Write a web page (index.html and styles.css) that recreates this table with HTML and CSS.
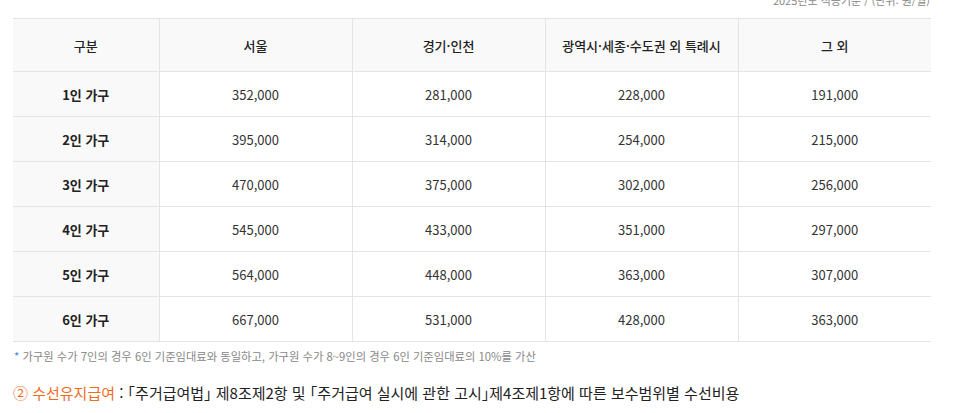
FILE: index.html
```html
<!DOCTYPE html>
<html lang="ko">
<head>
<meta charset="utf-8">
<link rel="stylesheet" href="styles.css">
</head>
<body>
<div class="wrap">
  <div class="caption"><span class="star">*</span> 2025년도 적용기준 / (단위: 원/월)</div>
  <table class="rent">
    <colgroup>
      <col class="c0"><col class="c1"><col class="c1"><col class="c1"><col class="c1">
    </colgroup>
    <thead>
      <tr><th>구분</th><th>서울</th><th>경기·인천</th><th>광역시·세종·수도권 외 특례시</th><th>그 외</th></tr>
    </thead>
    <tbody>
      <tr><th>1인 가구</th><td>352,000</td><td>281,000</td><td>228,000</td><td>191,000</td></tr>
      <tr><th>2인 가구</th><td>395,000</td><td>314,000</td><td>254,000</td><td>215,000</td></tr>
      <tr><th>3인 가구</th><td>470,000</td><td>375,000</td><td>302,000</td><td>256,000</td></tr>
      <tr><th>4인 가구</th><td>545,000</td><td>433,000</td><td>351,000</td><td>297,000</td></tr>
      <tr><th>5인 가구</th><td>564,000</td><td>448,000</td><td>363,000</td><td>307,000</td></tr>
      <tr><th>6인 가구</th><td>667,000</td><td>531,000</td><td>428,000</td><td>363,000</td></tr>
    </tbody>
  </table>
  <p class="note"><span class="star">*</span> 가구원 수가 7인의 경우 6인 기준임대료와 동일하고, 가구원 수가 8~9인의 경우 6인 기준임대료의 10%를 가산</p>
  <p class="desc"><span class="hl">② 수선유지급여</span> : 「주거급여법」 제8조제2항 및 「주거급여 실시에 관한 고시」제4조제1항에 따른 보수범위별 수선비용</p>
</div>
</body>
</html>
```
FILE: styles.css
```css
html, body {
  margin: 0;
  padding: 0;
  background: #fff;
}
body {
  font-family: "Noto Sans CJK KR", "Noto Sans", sans-serif;
  color: #333;
  overflow: hidden;
}
.wrap {
  width: 917px;
  padding-left: 13px;
}
.caption {
  font-size: 11px;
  line-height: 13px;
  color: #888;
  text-align: right;
  margin-top: -6px;
  margin-bottom: 11px;
}
.star {
  color: #4a86e8;
}
.rent {
  width: 917px;
  border-collapse: collapse;
  table-layout: fixed;
  border-top: 1px solid #e2e2e2;
  border-bottom: 1px solid #e2e2e2;
}
.c0 { width: 146px; }
.c1 { width: 193px; }
.rent th, .rent td {
  border-bottom: 1px solid #e4e4e4;
  border-left: 1px solid #e4e4e4;
  text-align: center;
  font-size: 13px;
  padding: 0;
}
.rent tr > :first-child {
  border-left: none;
}
.rent thead th {
  height: 52px;
  background: #f9f9f9;
  font-weight: 500;
  color: #222;
}
.rent tbody th {
  height: 44px;
  background: #f9f9f9;
  font-weight: 600;
  color: #222;
}
.rent tbody td {
  color: #333;
}
.note {
  margin: 6px 0 0 1px;
  font-size: 11.3px;
  line-height: 16px;
  color: #888;
}
.desc {
  margin: 19px 0 0 0;
  font-size: 15px;
  line-height: 20px;
  color: #222;
  font-feature-settings: "halt";
}
.hl {
  color: #f26b1d;
}
```
